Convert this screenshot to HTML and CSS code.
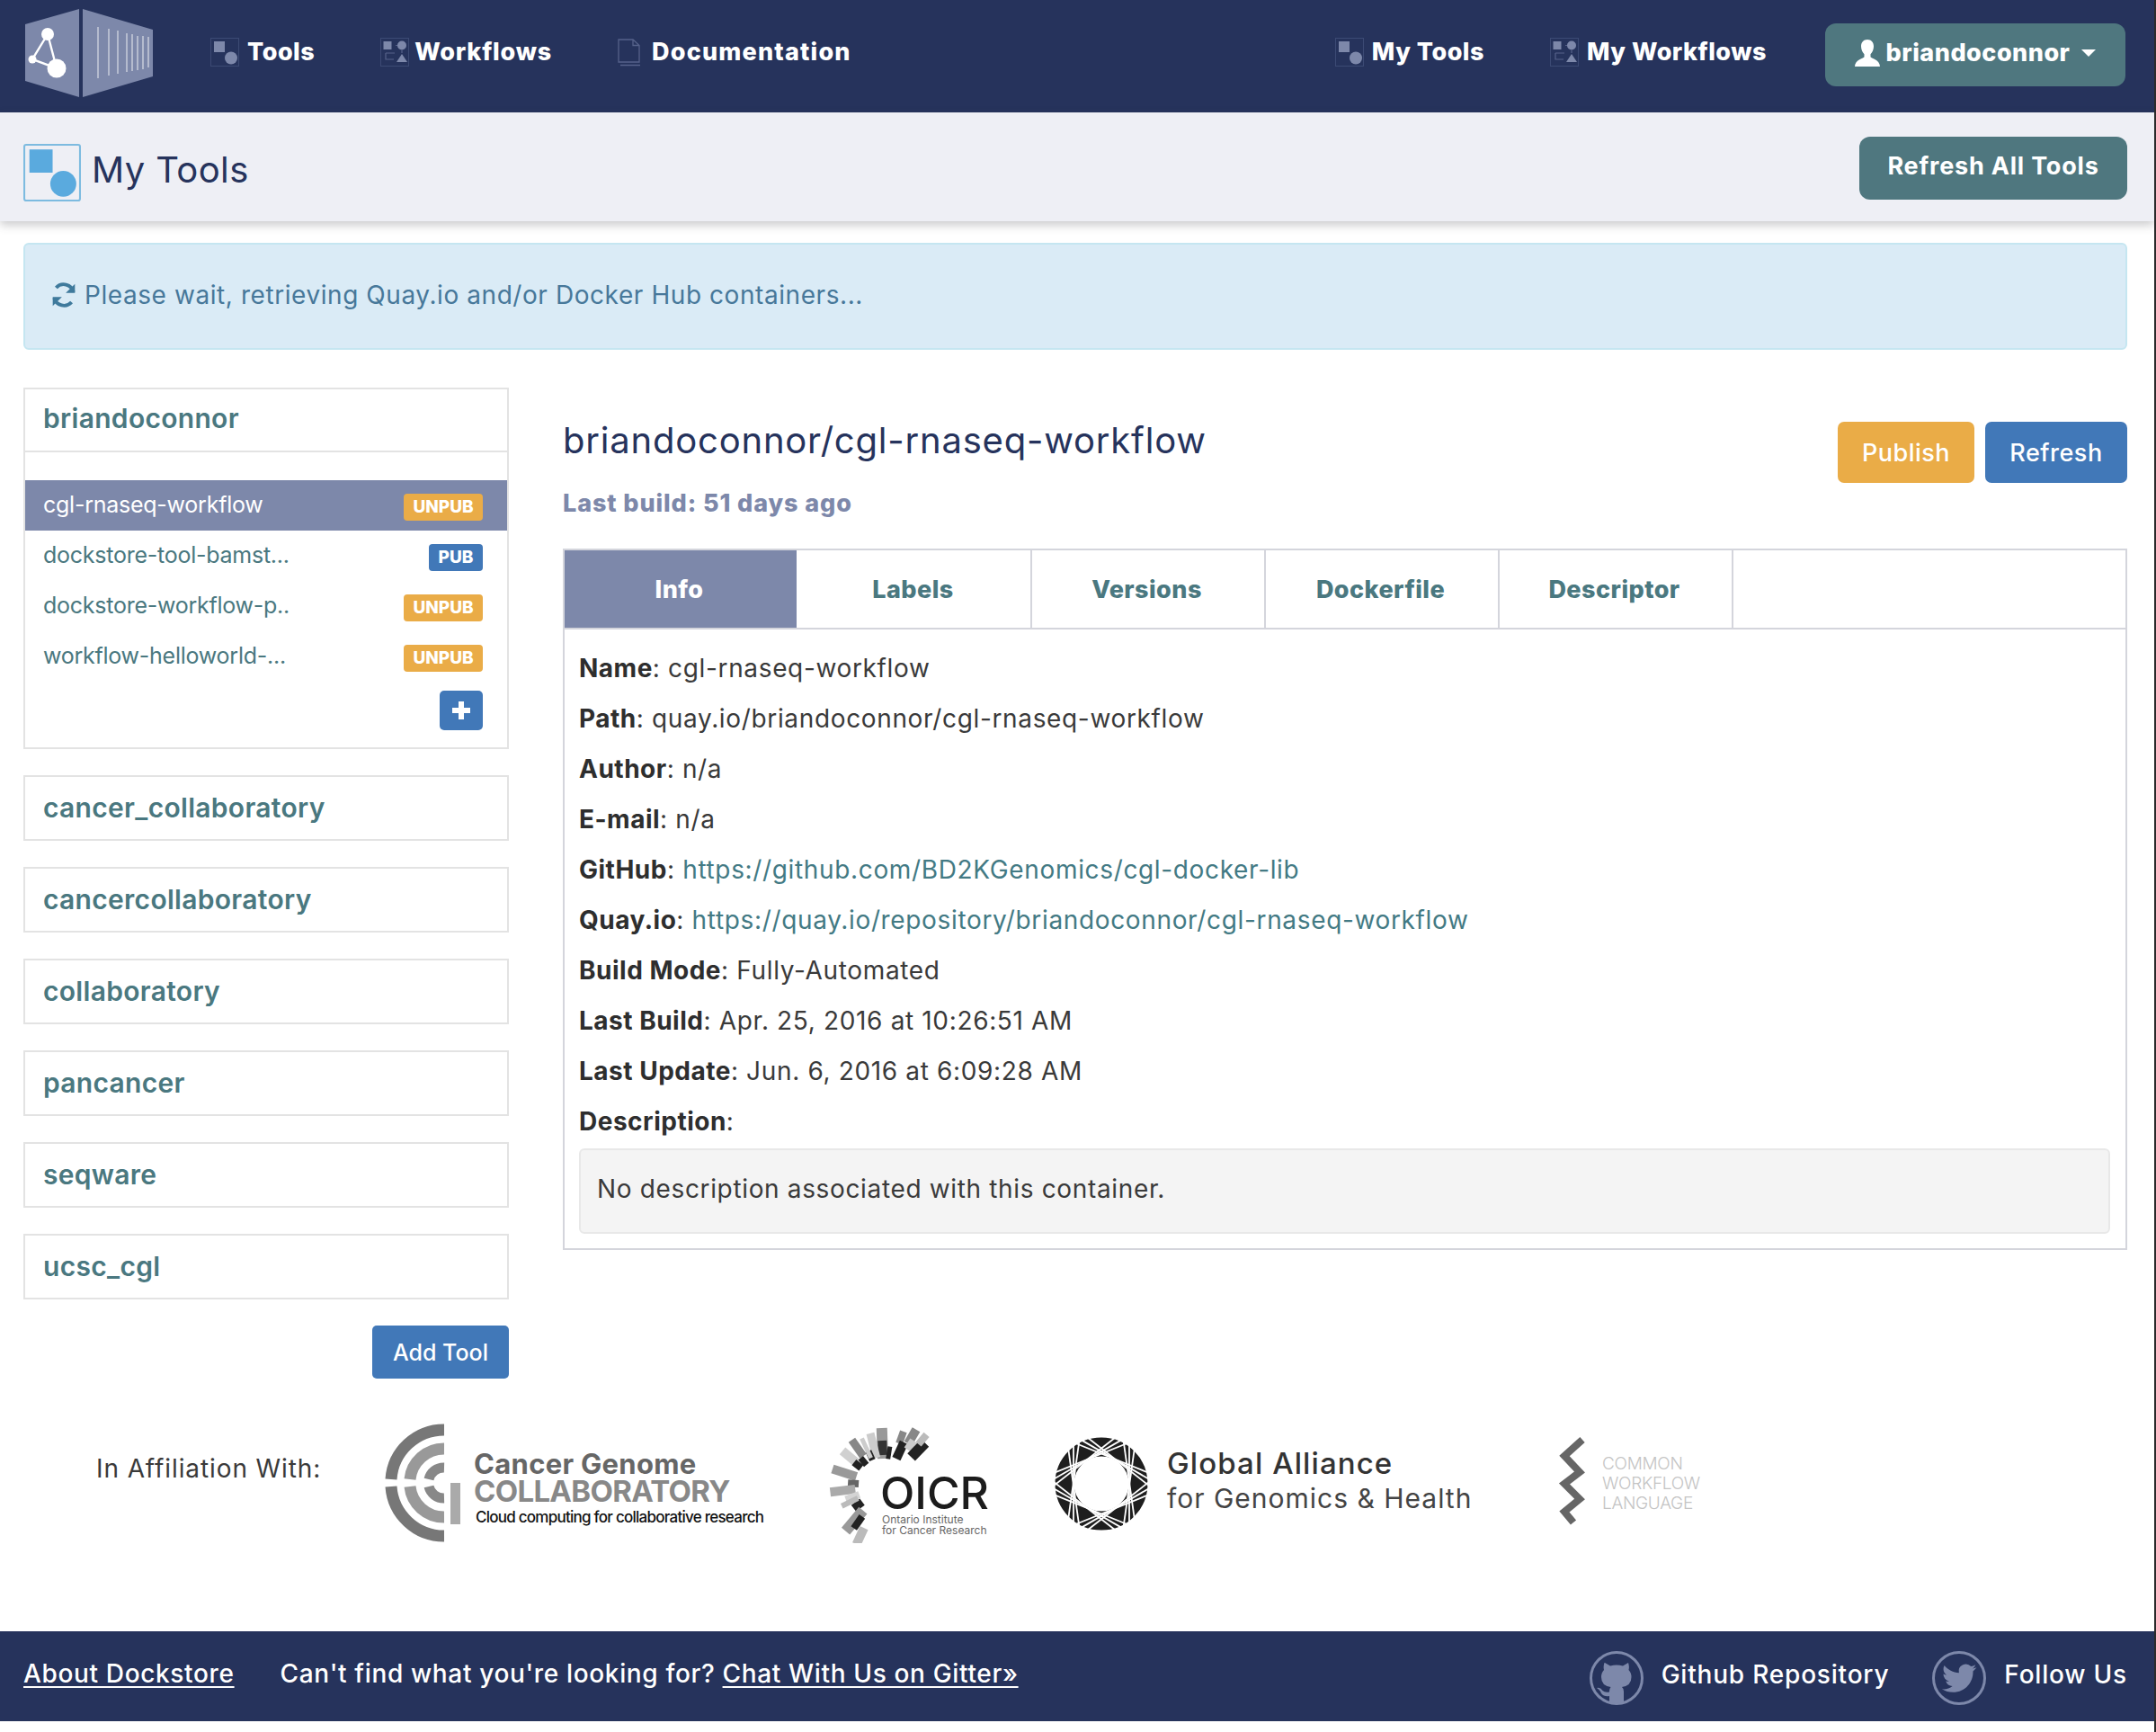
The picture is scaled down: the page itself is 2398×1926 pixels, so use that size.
FILE: index.html
```html
<!DOCTYPE html>
<html lang="en">
<head>
<meta charset="utf-8">
<title>My Tools</title>
<link rel="stylesheet" href="styles.css">
</head>
<body>
<div class="page">
<nav class="nav">
  <svg class="logo" viewBox="26 8 148 102" aria-hidden="true">
    <polygon points="28,27 88,10 88,108 28,90" fill="#7d88aa"/>
    <polygon points="92,10 170,33 170,85 92,108" fill="#7d88aa"/>
    <g stroke="#c3c8d8" stroke-width="1.6"><path d="M109 30V87M121 32V84M131 34V82M141 37V80M147 38V79M153 40V78M159 40V77M165 41V75"/></g>
    <path d="M53 38 36 66 63 76Z" fill="none" stroke="#fff" stroke-width="2.4"/>
    <circle cx="53" cy="38" r="7" fill="#fff"/><circle cx="36" cy="66" r="4.5" fill="#fff"/><circle cx="63" cy="76" r="10.5" fill="#fff"/>
  </svg>
  <a class="nav-link first"><svg class="nav-ico" viewBox="0 0 32 32"><use href="#tool-ico"/></svg>Tools</a>
  <a class="nav-link tight"><svg class="nav-ico" viewBox="0 0 32 32"><use href="#flow-ico"/></svg>Workflows</a>
  <a class="nav-link wide"><svg class="nav-ico doc" viewBox="0 0 27 32"><path d="M1 2h16l7 6.500V27H1zM17 2v6.500h7M3 30.500h22" fill="none" stroke="#56628a" stroke-width="1.300"/></svg>Documentation</a>
  <a class="nav-link push"><svg class="nav-ico" viewBox="0 0 32 32"><use href="#tool-ico"/></svg>My Tools</a>
  <a class="nav-link"><svg class="nav-ico" viewBox="0 0 32 32"><use href="#flow-ico"/></svg>My Workflows</a>
  <button class="btn teal user"><svg class="person" viewBox="0 0 28 32"><path d="M14 1c4.500 0 7 3.200 7 7.500 0 3.500-1.500 7-3.500 8.700v3c0 1.500 10.500 3 10.500 10.800H0c0-7.800 10.500-9.300 10.500-10.800v-3C8.500 15.500 7 12 7 8.500 7 4.200 9.500 1 14 1z" fill="#fff"/></svg>briandoconnor<span class="caret"></span></button>
</nav>

<header class="band">
  <div class="band-title">
    <svg class="big-ico" viewBox="0 0 62 62"><rect x="1" y="1" width="60" height="60" rx="2" fill="none" stroke="#7dbbe0" stroke-width="2"/><rect x="6.500" y="6" width="25" height="25" fill="#5aaade"/><circle cx="43" cy="43" r="14" fill="#5aaade"/></svg>
    <h1>My Tools</h1>
  </div>
  <button class="btn teal refresh-all">Refresh All Tools</button>
</header>

<main class="content">
  <div class="alert">
    <svg class="spin" viewBox="0 0 28 28"><path d="M24 11A10.500 10.500 0 0 0 6 6.500M4 17a10.500 10.500 0 0 0 18 4.500" fill="none" stroke="#3f7a9c" stroke-width="3.600"/><path d="M25.500 2.500v9.500h-9.500zM2.500 25.500V16H12z" fill="#3f7a9c"/></svg>
    Please wait, retrieving Quay.io and/or Docker Hub containers...
  </div>

  <div class="columns">
    <aside class="side">
      <section class="panel open">
        <div class="panel-head">briandoconnor</div>
        <ul class="items">
          <li class="item active"><span>cgl-rnaseq-workflow</span><b class="badge unpub">UNPUB</b></li>
          <li class="item"><span>dockstore-tool-bamst...</span><b class="badge pub">PUB</b></li>
          <li class="item"><span>dockstore-workflow-p..</span><b class="badge unpub">UNPUB</b></li>
          <li class="item"><span>workflow-helloworld-...</span><b class="badge unpub">UNPUB</b></li>
        </ul>
        <div class="plus-row"><button class="plus"><svg viewBox="0 0 22 22"><path d="M11 1v20M1 11h20" stroke="#fff" stroke-width="6"/></svg></button></div>
      </section>
      <section class="panel"><div class="panel-head">cancer_collaboratory</div></section>
      <section class="panel"><div class="panel-head">cancercollaboratory</div></section>
      <section class="panel"><div class="panel-head">collaboratory</div></section>
      <section class="panel"><div class="panel-head">pancancer</div></section>
      <section class="panel"><div class="panel-head">seqware</div></section>
      <section class="panel"><div class="panel-head">ucsc_cgl</div></section>
      <div class="add-row"><button class="btn blue add">Add Tool</button></div>
    </aside>

    <section class="detail">
      <div class="detail-head">
        <div>
          <h2>briandoconnor/cgl-rnaseq-workflow</h2>
          <p class="last">Last build: 51 days ago</p>
        </div>
        <div class="actions">
          <button class="btn orange publish">Publish</button>
          <button class="btn blue refresh">Refresh</button>
        </div>
      </div>
      <div class="tabbox">
        <div class="tabs">
          <a class="tab active">Info</a><a class="tab">Labels</a><a class="tab">Versions</a><a class="tab">Dockerfile</a><a class="tab">Descriptor</a>
        </div>
        <div class="tab-body">
          <p><b>Name</b>: cgl-rnaseq-workflow</p>
          <p><b>Path</b>: quay.io/briandoconnor/cgl-rnaseq-workflow</p>
          <p><b>Author</b>: n/a</p>
          <p><b>E-mail</b>: n/a</p>
          <p><b>GitHub</b>: <a>https://github.com/BD2KGenomics/cgl-docker-lib</a></p>
          <p><b>Quay.io</b>: <a>https://quay.io/repository/briandoconnor/cgl-rnaseq-workflow</a></p>
          <p><b>Build Mode</b>: Fully-Automated</p>
          <p><b>Last Build</b>: Apr. 25, 2016 at 10:26:51 AM</p>
          <p><b>Last Update</b>: Jun. 6, 2016 at 6:09:28 AM</p>
          <p><b>Description</b>:</p>
          <div class="well"><span>No description associated with this container.</span></div>
        </div>
      </div>
    </section>
  </div>

  <div class="affil">
    <div class="affil-label">In Affiliation With:</div>
    <svg class="aff cgc" viewBox="428 1581 424 134">
      <g fill="none" stroke="#777">
        <path d="M494 1589A59 59 0 0 0 435 1644" stroke-width="13"/>
        <path d="M435 1652A59 59 0 0 0 494 1707" stroke-width="13"/>
        <path d="M494 1610A38 38 0 0 0 456 1644" stroke-width="13" stroke="#999"/>
        <path d="M456 1652A38 38 0 0 0 494 1686" stroke-width="13" stroke="#999"/>
        <path d="M494 1631A17 17 0 0 0 477 1644" stroke-width="11" stroke="#888"/>
        <path d="M477 1652A17 17 0 0 0 494 1665" stroke-width="11" stroke="#888"/>
      </g>
      <rect x="501" y="1648" width="11" height="46" fill="#aaa"/>
      <text x="527" y="1638" class="cg1">Cancer Genome</text>
      <text x="527" y="1669" class="cg2">COLLABORATORY</text>
      <text x="529" y="1692" class="cg3">Cloud computing for collaborative research</text>
    </svg>
    <svg class="aff oicr" viewBox="920 1581 180 134">
      <g transform="translate(983 1651)">
        <rect x="-6" y="-64" width="12" height="34" fill="#999" transform="rotate(-2)"/>
        <rect x="-5" y="-50" width="10" height="16" fill="#333" transform="rotate(-2)"/>
        <rect x="-5" y="-60" width="9" height="28" fill="#ccc" transform="rotate(-14)"/>
        <rect x="-2.500" y="-44" width="5" height="14" fill="#222" transform="rotate(9)"/>
        <rect x="-4" y="-64" width="8" height="14" fill="#888" transform="rotate(20)"/>
        <rect x="-5" y="-53" width="10" height="20" fill="#222" transform="rotate(25)"/>
        <rect x="-5" y="-72" width="10" height="18" fill="#888" transform="rotate(30)"/>
        <rect x="-5" y="-60" width="10" height="12" fill="#ccc" transform="rotate(34)"/>
        <rect x="-6" y="-66" width="12" height="22" fill="#222" transform="rotate(44)"/>
        <rect x="-4" y="-74" width="8" height="14" fill="#bbb" transform="rotate(40)"/>
        <rect x="-4.500" y="-62" width="9" height="22" fill="#888" transform="rotate(-35)"/>
        <rect x="-3.500" y="-42" width="7" height="11" fill="#222" transform="rotate(-24)"/>
        <rect x="-2.500" y="-58" width="5" height="24" fill="#ccc" transform="rotate(-25)"/>
        <rect x="-5" y="-60" width="10" height="20" fill="#d0d0d0" transform="rotate(-50)"/>
        <rect x="-4" y="-42" width="8" height="10" fill="#222" transform="rotate(-52)"/>
        <rect x="-3.500" y="-40" width="7" height="10" fill="#222" transform="rotate(-40)"/>
        <rect x="-5" y="-60" width="10" height="28" fill="#999" transform="rotate(-72)"/>
        <rect x="-4" y="-40" width="8" height="12" fill="#666" transform="rotate(-86)"/>
        <rect x="-5" y="-60" width="10" height="28" fill="#aaa" transform="rotate(-97)"/>
        <rect x="-4" y="-45" width="8" height="16" fill="#d4d4d4" transform="rotate(-110)"/>
        <rect x="-4.500" y="-42" width="9" height="12" fill="#222" transform="rotate(-127)"/>
        <rect x="-3" y="-52" width="6" height="20" fill="#bbb" transform="rotate(-116)"/>
        <rect x="-6" y="-66" width="12" height="30" fill="#999" transform="rotate(-140)"/>
        <rect x="-4" y="-58" width="8" height="16" fill="#222" transform="rotate(-145)"/>
        <rect x="-5" y="-72" width="10" height="20" fill="#bbb" transform="rotate(-155)"/>
      </g>
      <text x="979" y="1677" class="oi1">OICR</text>
      <text x="981" y="1693" class="oi2">Ontario Institute</text>
      <text x="981" y="1705" class="oi2">for Cancer Research</text>
    </svg>
    <svg class="aff ga" viewBox="1172 1581 466 134">
      <g transform="translate(1225 1649)">
        <circle r="41" fill="none" stroke="#1e1e1e" stroke-width="21"/>
        <g stroke="#fff" stroke-width="1.800">
          <g id="chords"><path d="M-52 -31H52" transform="rotate(22)"/><path d="M-52 -31H52" transform="rotate(30)"/><path d="M-52 -31H52" transform="rotate(38)"/></g>
          <use href="#chords" transform="rotate(60)"/><use href="#chords" transform="rotate(120)"/><use href="#chords" transform="rotate(180)"/><use href="#chords" transform="rotate(240)"/><use href="#chords" transform="rotate(300)"/>
        </g>
      </g>
      <text x="1298" y="1638" class="ga1">Global Alliance</text>
      <text x="1298" y="1676" class="ga2">for Genomics &amp; Health</text>
    </svg>
    <svg class="aff cwl" viewBox="1732 1581 160 134">
      <path d="M1760 1600 1740 1618 1757 1636 1740 1649 1757 1666 1740 1680 1750 1692" fill="none" stroke="#666" stroke-width="8"/>
      <text x="1782" y="1633" class="cw">COMMON</text>
      <text x="1782" y="1655" class="cw">WORKFLOW</text>
      <text x="1782" y="1677" class="cw">LANGUAGE</text>
    </svg>
  </div>
</main>

<footer class="foot">
  <a class="ul foot-text">About Dockstore</a>
  <span class="foot-q foot-text">Can't find what you're looking for? <a class="ul">Chat With Us on Gitter»</a></span>
  <a class="foot-link push"><svg class="ring" viewBox="0 0 60 60"><circle cx="30" cy="30" r="28.500" fill="none" stroke="#7d88aa" stroke-width="3"/><path d="M17 13l6 3.500q7-2 14 0l6-3.500q1.500 4 .5 8 3 3 3 8 0 9.500-10.500 11 2 1.500 2 5V57q-8 2-16 0V50q-6 1-9-3-1.500-4-5-6 4-1 6.500 3 2.500 2.500 7.500 1.500v-1q0-2.500 1.500-4.500-10.500-1.500-10.500-11 0-5 3-8-1-4 .5-8z" fill="#7d88aa"/></svg>Github Repository</a>
  <a class="foot-link"><svg class="ring" viewBox="0 0 60 60"><circle cx="30" cy="30" r="28.500" fill="none" stroke="#7d88aa" stroke-width="3"/><path transform="translate(11 11) scale(1.600)" d="M23.953 4.570a10 10 0 01-2.825.775 4.958 4.958 0 002.163-2.723c-.951.555-2.005.959-3.127 1.184a4.920 4.920 0 00-8.384 4.482C7.690 8.095 4.067 6.130 1.640 3.162a4.822 4.822 0 00-.666 2.475c0 1.710.870 3.213 2.188 4.096a4.904 4.904 0 01-2.228-.616v.060a4.923 4.923 0 003.946 4.827 4.996 4.996 0 01-2.212.085 4.936 4.936 0 004.604 3.417 9.867 9.867 0 01-6.102 2.105c-.390 0-.779-.023-1.170-.067a13.995 13.995 0 007.557 2.209c9.053 0 13.998-7.496 13.998-13.985 0-.210 0-.420-.015-.630A9.935 9.935 0 0024 4.590z" fill="#7d88aa"/></svg>Follow Us</a>
</footer>
</div>

<svg class="defs" aria-hidden="true">
  <symbol id="tool-ico" viewBox="0 0 32 32"><rect x=".5" y=".5" width="31" height="31" fill="none" stroke="#3c4a74"/><rect x="4" y="4" width="12" height="12" fill="#7d88aa"/><circle cx="23" cy="22.500" r="7" fill="#7d88aa"/></symbol>
  <symbol id="flow-ico" viewBox="0 0 32 32"><rect x=".5" y=".5" width="31" height="31" fill="none" stroke="#3c4a74"/><rect x="3.500" y="4" width="9" height="9" fill="#7d88aa"/><circle cx="24" cy="8.500" r="5" fill="#7d88aa"/><path d="M24 18l6 9H18z" fill="#7d88aa"/><path d="M17 8.500h2M24 14v3M6 17h10M6 17v7h9" fill="none" stroke="#56628a" stroke-width="1.200"/></symbol>
</svg>
</body>
</html>
```
FILE: styles.css
```css
* { box-sizing: border-box; }
html { background: #2b2b2b; }
body { margin: 0; font-family: Inter, "Liberation Sans", sans-serif; color: #333; background: #2b2b2b; }
.page { width: 2396px; height: 1926px; background: #fff; overflow: hidden; }
p, h1, h2, ul { margin: 0; padding: 0; list-style: none; }
button { font: inherit; border: 0; cursor: pointer; }
.defs { position: absolute; width: 0; height: 0; }

.nav { height: 125px; background: #26335c; display: flex; align-items: center; padding: 0 32px 0 26px; color: #fff; }
.logo { width: 148px; height: 102px; margin-top: -7px; }
.nav-link { display: flex; align-items: center; gap: 9px; font-weight: 800; font-size: 27px; letter-spacing: .5px; margin-left: 73px; margin-top: -10px; white-space: nowrap; color: #fff; }
.nav-link.first { margin-left: 60px; }
.nav-link.tight { gap: 6px; letter-spacing: .8px; }
.nav-link.wide { letter-spacing: 1.2px; gap: 11px; }
.nav-link.push { margin-left: auto; }
.nav-ico { width: 32px; height: 32px; flex: none; }
.nav-ico.doc { width: 27px; }
.btn { color: #fff; font-weight: 700; font-size: 27px; letter-spacing: .5px; border-radius: 12px; display: flex; align-items: center; justify-content: center; }
.teal { background: #4f777f; }
.blue { background: #4178b8; font-weight: 500; }
.orange { background: #eaac47; font-weight: 500; }
.user { width: 334px; height: 70px; margin-left: 65px; margin-top: -3px; padding-bottom: 6px; font-weight: 800; gap: 7px; }
.person { width: 28px; height: 32px; }
.caret { width: 0; height: 0; border: 8px solid transparent; border-top-color: #fff; border-bottom: 0; margin-left: 6px; }

.band { height: 121px; background: #eeeff5; display: flex; align-items: center; justify-content: space-between; padding: 13px 30px 0 26px; box-shadow: 0 4px 10px rgba(60,60,70,.28); position: relative; }
.band-title { display: flex; align-items: center; gap: 12px; }
.big-ico { width: 64px; height: 64px; }
h1 { font-size: 40px; font-weight: 400; color: #26335c; letter-spacing: .4px; margin-bottom: 8px; }
.refresh-all { width: 298px; height: 70px; margin-top: -10px; padding-bottom: 6px; letter-spacing: .8px; }

.content { padding: 24px 30px 0 26px; }
.alert { height: 119px; background: #daebf6; border: 2px solid #c5e6f1; border-radius: 6px; display: flex; align-items: center; gap: 8px; padding: 0 0 4px 28px; color: #47789a; font-size: 28px; letter-spacing: .57px; }
.spin { width: 30px; height: 30px; }

.columns { display: grid; grid-template-columns: 540px 1fr; gap: 60px; margin-top: 42px; }
.side { display: flex; flex-direction: column; gap: 29px; }
.panel { border: 2px solid #e3e3e3; }
.panel-head { height: 69px; display: flex; align-items: center; padding: 0 0 2px 20px; font-size: 30px; font-weight: 600; letter-spacing: .3px; color: #4a7880; }
.panel.open { height: 402px; }
.panel.open .panel-head { height: 70px; padding-bottom: 5px; border-bottom: 2px solid #e3e3e3; }
.items { padding-top: 31px; }
.item { height: 56px; display: flex; align-items: center; justify-content: space-between; padding: 0 27px 0 20px; font-size: 25px; letter-spacing: -.25px; color: #4a7880; }
.item span { margin-top: -2px; }
.item.active { background: #7d88aa; color: #fff; }
.badge { font-size: 19px; font-weight: 800; letter-spacing: 0; color: #fff; height: 30px; margin-top: 3px; border-radius: 4px; display: flex; align-items: center; justify-content: center; }
.unpub { width: 88px; background: #eaac47; }
.pub { width: 60px; background: #4178b8; }
.plus-row { display: flex; justify-content: flex-end; padding: 10px 27px 0 0; }
.plus { width: 48px; height: 44px; background: #4178b8; border-radius: 5px; padding: 0; display: flex; align-items: center; justify-content: center; }
.plus svg { width: 22px; height: 22px; }
.add-row { display: flex; justify-content: flex-end; }
.add { width: 152px; height: 59px; font-size: 25px; letter-spacing: 0; border-radius: 5px; }

.detail-head { display: flex; justify-content: space-between; padding-top: 31px; height: 179px; }
h2 { font-size: 40px; line-height: 56px; font-weight: 400; color: #26335c; letter-spacing: .8px; }
.last { font-size: 27px; line-height: 40px; margin-top: 22px; font-weight: 800; letter-spacing: .9px; color: #7d88aa; }
.actions { display: flex; gap: 12px; margin-top: 7px; }
.publish { width: 152px; height: 68px; border-radius: 7px; }
.refresh { width: 158px; height: 68px; border-radius: 7px; }

.tabbox { border: 2px solid #d4d5dc; height: 780px; }
.tabs { display: flex; height: 88px; border-bottom: 2px solid #d4d5dc; }
.tab { width: 260px; border-right: 2px solid #d4d5dc; padding-right: 3px; display: flex; align-items: center; justify-content: center; font-weight: 800; font-size: 27px; letter-spacing: .45px; color: #4a7880; }
.tab.active { background: #7d88aa; color: #fff; border-right: 2px solid #fff; }
.tab-body { padding: 15px 17px 0 16px; font-size: 28px; letter-spacing: .65px; line-height: 56px; color: #3a3a3a; }
.tab-body b { font-weight: 700; color: #2e2e2e; letter-spacing: .5px; }
.tab-body a { color: #437a84; }
.well { height: 95px; margin-top: 2px; background: #f4f4f4; border: 2px solid #e8e8e8; border-radius: 6px; display: flex; align-items: center; padding: 0 0 5px 18px; }

.affil { display: flex; align-items: flex-start; margin-top: 49px; height: 134px; }
.affil-label { font-size: 28px; letter-spacing: .9px; width: 402px; padding: 32px 0 0 81px; line-height: 38px; color: #3a3a3a; white-space: nowrap; }
.aff { height: 134px; flex: none; }
.cgc { width: 424px; }
.oicr { width: 180px; margin-left: 68px; }
.ga { width: 466px; margin-left: 72px; }
.cwl { width: 160px; margin-left: 94px; }
.cg1 { font-size: 31px; font-weight: 700; fill: #666; letter-spacing: .3px; }
.cg2 { font-size: 33px; font-weight: 700; fill: #888; letter-spacing: -.7px; }
.cg3 { font-size: 17px; font-weight: 500; fill: #111; letter-spacing: -.75px; }
.oi1 { font-size: 50px; font-weight: 500; fill: #1c1c1c; }
.oi2 { font-size: 12px; fill: #666; }
.ga1 { font-size: 33px; font-weight: 500; fill: #333; letter-spacing: 1.1px; }
.ga2 { font-size: 30px; font-weight: 400; fill: #444; letter-spacing: 1px; }
.cw { font-size: 19px; font-weight: 300; fill: #c4c4c4; letter-spacing: -.3px; }

.foot { margin-top: 98px; height: 100px; background: #26335c; color: #fff; display: flex; align-items: center; padding: 0 30px 0 26px; font-size: 28px; letter-spacing: .65px; font-weight: 500; }
.ul { text-decoration: underline; text-underline-offset: 4px; }
.foot-text { padding-bottom: 6px; }
.foot-q { margin-left: 51px; }
.foot-link { display: flex; align-items: center; gap: 20px; margin-left: 48px; padding-bottom: 4px; letter-spacing: .8px; }
.foot-link.push { margin-left: auto; }
.ring { width: 60px; height: 60px; margin-top: 8px; }
```
